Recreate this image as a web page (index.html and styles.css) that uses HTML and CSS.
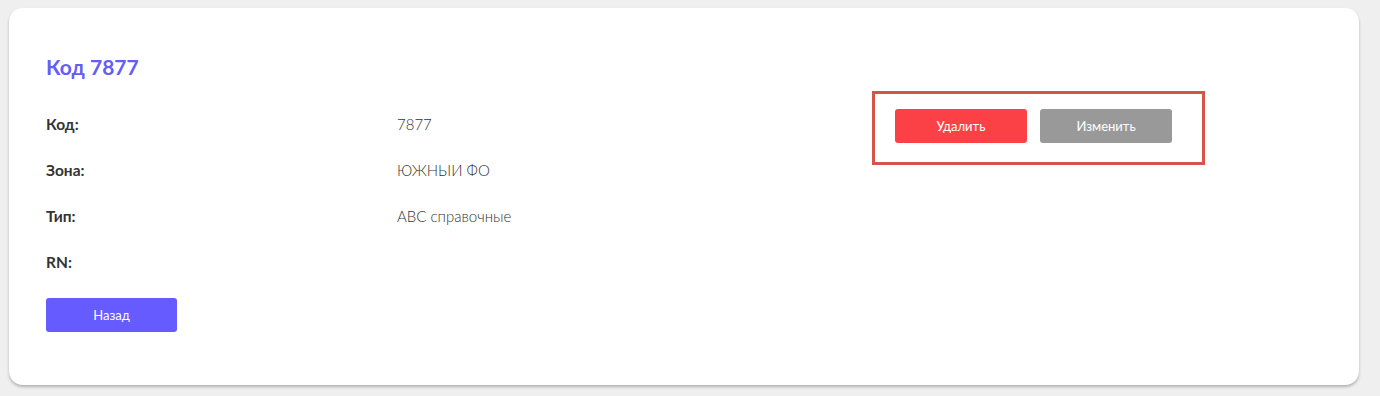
FILE: index.html
```html
<!DOCTYPE html>
<html lang="ru">
<head>
    <meta charset="UTF-8">
    <meta name="viewport" content="width=device-width, initial-scale=1.0">
    <title>Код 7877</title>
    <link rel="stylesheet" href="styles.css">
</head>
<body>
    <div class="card">
        <div class="details">
            <h1 class="card-title">Код 7877</h1>
            <div class="row">
                <div class="label">Код:</div>
                <div class="value">7877</div>
            </div>
            <div class="row">
                <div class="label">Зона:</div>
                <div class="value">ЮЖНЫИ ФО</div>
            </div>
            <div class="row">
                <div class="label">Тип:</div>
                <div class="value">ABC справочные</div>
            </div>
            <div class="row">
                <div class="label">RN:</div>
                <div class="value"></div>
            </div>
            <button class="btn btn-back">Назад</button>
        </div>
        <div class="actions">
            <button class="btn btn-delete">Удалить</button>
            <button class="btn btn-edit">Изменить</button>
        </div>
    </div>
</body>
</html>
```

FILE: styles.css
```css
* {
    margin: 0;
    padding: 0;
    box-sizing: border-box;
}

body {
    background-color: #efefef;
    font-family: Lato, "Noto Sans", sans-serif;
    color: #333;
    padding: 8px 21px 11px 9px;
}

.card {
    display: flex;
    align-items: flex-start;
    height: 377px;
    background-color: #fff;
    border-radius: 14px;
    box-shadow: 0 2px 3px rgba(0, 0, 0, 0.25);
    padding: 46px 37px 0 37px;
}

.details {
    width: 826px;
}

.card-title {
    font-size: 21px;
    font-weight: 700;
    line-height: 26px;
    color: #665cf6;
    margin-bottom: 21px;
}

.row {
    display: flex;
    align-items: center;
    height: 46px;
}

.label {
    width: 351px;
    font-size: 15.5px;
    font-weight: 700;
    color: #333;
}

.value {
    font-size: 15px;
    font-weight: 300;
    color: #333;
}

.btn {
    width: 132px;
    height: 34px;
    border: none;
    border-radius: 3px;
    color: #fff;
    font-family: inherit;
    font-size: 13px;
    cursor: pointer;
}

.btn-back {
    width: 131px;
    margin-top: 13px;
    background-color: #665bff;
}

.actions {
    display: flex;
    gap: 13px;
    margin-top: 37px;
    padding: 15px 30px 19px 20px;
    border: 3px solid #d6554b;
}

.btn-delete {
    background-color: #fc4146;
}

.btn-edit {
    background-color: #999;
}
```
